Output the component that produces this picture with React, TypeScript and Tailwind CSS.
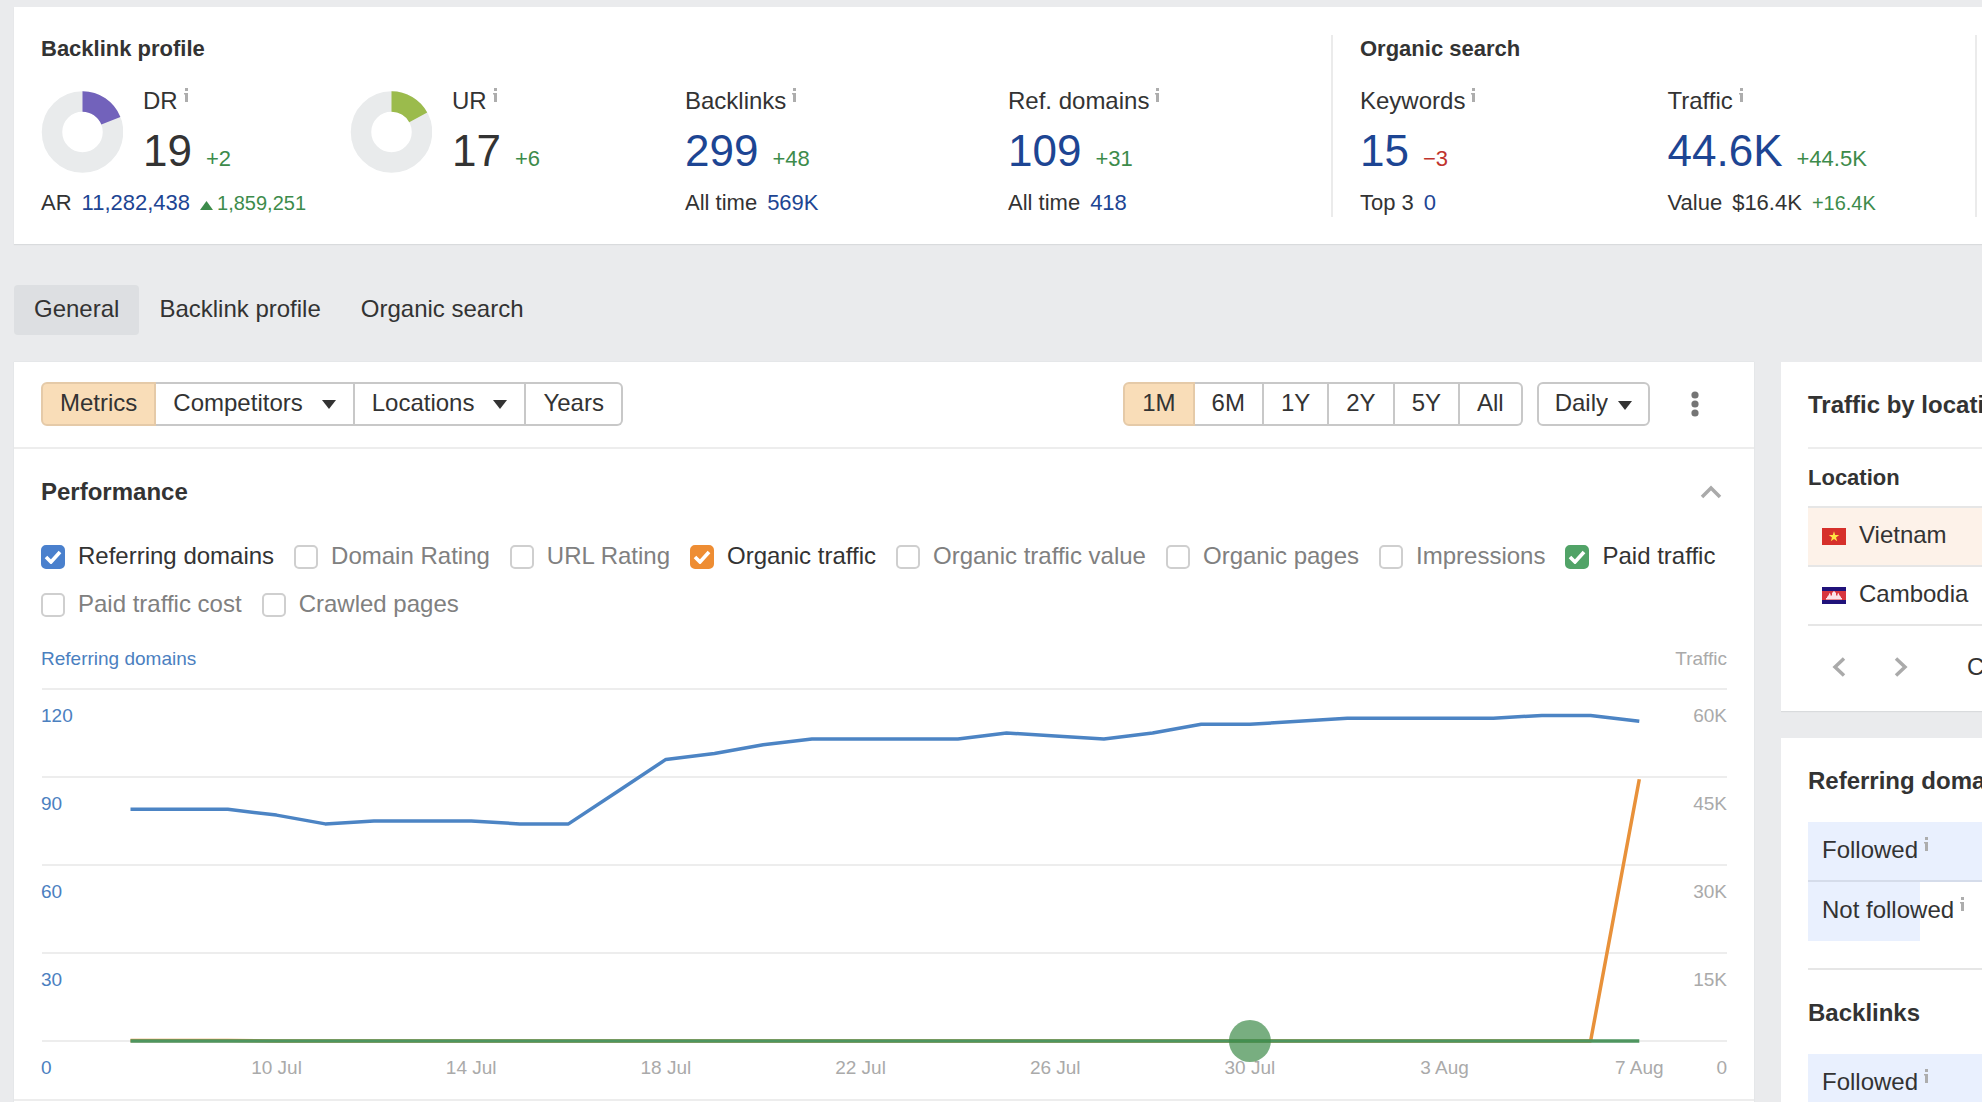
import { clsx } from "clsx";
import { useState } from "react";
import type { ReactNode } from "react";

type Metric = { id: string; label: string; checked?: boolean; color?: string };

const METRICS: Metric[] = [
  { id: "ref-domains", label: "Referring domains", checked: true, color: "checked:border-[#4a80cd] checked:bg-[#4a80cd]" },
  { id: "dr", label: "Domain Rating" },
  { id: "ur", label: "URL Rating" },
  { id: "organic-traffic", label: "Organic traffic", checked: true, color: "checked:border-[#ee8d33] checked:bg-[#ee8d33]" },
  { id: "organic-value", label: "Organic traffic value" },
  { id: "organic-pages", label: "Organic pages" },
  { id: "impressions", label: "Impressions" },
  { id: "paid-traffic", label: "Paid traffic", checked: true, color: "checked:border-[#51a367] checked:bg-[#51a367]" },
  { id: "paid-cost", label: "Paid traffic cost" },
  { id: "crawled", label: "Crawled pages" },
];

const TABS = ["General", "Backlink profile", "Organic search"];
const RANGES = ["1M", "6M", "1Y", "2Y", "5Y", "All"];

// one value per day, 7 Jul - 7 Aug
const REF_DOMAINS = [
  79, 79, 79, 77, 74, 75, 75, 75, 74, 74, 85, 96, 98, 101, 103, 103,
  103, 103, 105, 104, 103, 105, 108, 108, 109, 110, 110, 110, 110, 111, 111, 109,
];
const ORGANIC_TRAFFIC = REF_DOMAINS.map((_, i) => (i === 31 ? 44600 : i < 3 ? 80 : 0));
const PAID_TRAFFIC = REF_DOMAINS.map(() => 0);

const X_LABELS = ["10 Jul", "14 Jul", "18 Jul", "22 Jul", "26 Jul", "30 Jul", "3 Aug", "7 Aug"];
const Y_LEFT = ["120", "90", "60", "30", "0"];
const Y_RIGHT = ["60K", "45K", "30K", "15K", "0"];

function Info() {
  return (
    <svg width="5" height="14" viewBox="0 0 5 14" fill="#adadad" className="mt-[3px] ml-[6px] shrink-0" aria-hidden="true">
      <rect x="1" y="0" width="3" height="3" />
      <path d="M0 5h4v9H1V6.500H0z" />
    </svg>
  );
}

function Caret() {
  return (
    <svg width="14" height="9" viewBox="0 0 14 9" fill="#333" className="mt-[3px] shrink-0" aria-hidden="true">
      <path d="M0 0h14L7 9z" />
    </svg>
  );
}

function Donut({ value, color }: { value: number; color: string }) {
  return (
    <svg width="82" height="82" viewBox="0 0 82 82" fill="none" className="mt-[6px] shrink-0" aria-hidden="true">
      <circle cx="41.500" cy="41" r="30.5" stroke="#e9ebec" strokeWidth="20.5" />
      <circle
        cx="41.500"
        cy="41"
        r="30.5"
        stroke={color}
        strokeWidth="20.5"
        pathLength="100"
        strokeDasharray={`${value} ${100 - value}`}
        transform="rotate(-90 41.500 41)"
      />
    </svg>
  );
}

type StatProps = {
  label: string;
  value: string;
  delta: string;
  down?: boolean;
  plain?: boolean;
};

function Stat({ label, value, delta, down, plain }: StatProps) {
  return (
    <div>
      <div className="flex text-[24px] leading-8">
        {label}
        <Info />
      </div>
      <div className="mt-2 flex items-baseline gap-[14px]">
        {plain ? (
          <span className="text-[44px] leading-[52px]">{value}</span>
        ) : (
          <a href="#" className="text-[44px] leading-[52px] text-[#1d4593]">{value}</a>
        )}
        <span className={clsx("text-[22px] leading-7", down ? "text-[#c0342d]" : "text-[#3d8b4b]")}>{delta}</span>
      </div>
    </div>
  );
}

function SubLine({ children }: { children: ReactNode }) {
  return <div className="mt-3 flex items-baseline gap-[10px] text-[22px] leading-7">{children}</div>;
}

function Overview() {
  return (
    <section className="ml-[14px] grid grid-cols-[1317fr_644fr_7fr] bg-white pt-7 pb-[27px] whitespace-nowrap shadow-[0_1px_1px_#d9dbdd]">
      <div className="pl-[27px]">
        <h2 className="text-[22px] leading-7 font-bold">Backlink profile</h2>
        <div className="mt-[22px] grid grid-cols-[309fr_335fr_323fr_323fr]">
          <div>
            <div className="flex gap-5">
              <Donut value={19} color="#7262bb" />
              <Stat label="DR" value="19" delta="+2" plain />
            </div>
            <SubLine>
              <span>AR</span>
              <a href="#" className="text-[#1d4593]">11,282,438</a>
              <span className="flex items-baseline gap-1 text-[20px] text-[#3d8b4b]">
                <svg width="13" height="9" viewBox="0 0 13 9" fill="currentColor" aria-hidden="true">
                  <path d="M0 9h13L6.500 0z" />
                </svg>
                1,859,251
              </span>
            </SubLine>
          </div>
          <div className="flex gap-5">
            <Donut value={17} color="#9bbb4c" />
            <Stat label="UR" value="17" delta="+6" plain />
          </div>
          <div>
            <Stat label="Backlinks" value="299" delta="+48" />
            <SubLine>
              <span>All time</span>
              <a href="#" className="text-[#1d4593]">569K</a>
            </SubLine>
          </div>
          <div>
            <Stat label="Ref. domains" value="109" delta="+31" />
            <SubLine>
              <span>All time</span>
              <a href="#" className="text-[#1d4593]">418</a>
            </SubLine>
          </div>
        </div>
      </div>
      <div className="border-l-2 border-[#ebebeb] pl-[27px]">
        <h2 className="text-[22px] leading-7 font-bold">Organic search</h2>
        <div className="mt-[22px] grid grid-cols-2">
          <div>
            <Stat label="Keywords" value="15" delta="−3" down />
            <SubLine>
              <span>Top 3</span>
              <a href="#" className="text-[#1d4593]">0</a>
            </SubLine>
          </div>
          <div>
            <Stat label="Traffic" value="44.6K" delta="+44.5K" />
            <SubLine>
              <span>Value</span>
              <span>$16.4K</span>
              <span className="text-[20px] text-[#3d8b4b]">+16.4K</span>
            </SubLine>
          </div>
        </div>
      </div>
      <div className="border-l-2 border-[#ebebeb]" />
    </section>
  );
}

type SegmentProps = { label: string; active?: boolean; menu?: boolean; onClick?: () => void };

function Segment({ label, active, menu, onClick }: SegmentProps) {
  return (
    <button
      onClick={onClick}
      className={clsx(
        "flex h-[44px] items-center gap-[19px] border-y-2 border-r-2 px-[17px] pb-[2px] first:rounded-l-md first:border-l-2 last:rounded-r-md",
        active ? "border-[#e5caa8] bg-[#f9ddb8]" : "border-[#c8c8c8] bg-white"
      )}
    >
      {label}
      {menu && <Caret />}
    </button>
  );
}

function Toolbar() {
  const [range, setRange] = useState("1M");

  return (
    <div className="flex items-center justify-between border-b-2 border-[#ededed] px-[27px] pt-5 pb-[21px]">
      <div className="flex">
        <Segment label="Metrics" active />
        <Segment label="Competitors" menu />
        <Segment label="Locations" menu />
        <Segment label="Years" />
      </div>
      <div className="flex items-center">
        <div className="flex">
          {RANGES.map((r) => (
            <Segment key={r} label={r} active={r === range} onClick={() => setRange(r)} />
          ))}
        </div>
        <div className="ml-[14px] grid items-center">
          <select
            aria-label="Interval"
            defaultValue="Daily"
            className="col-start-1 row-start-1 field-sizing-content h-[44px] appearance-none rounded-md border-2 border-[#c8c8c8] bg-white pr-[40px] pb-[2px] pl-4"
          >
            <option>Daily</option>
            <option>Weekly</option>
            <option>Monthly</option>
          </select>
          <span className="pointer-events-none col-start-1 row-start-1 mr-[18px] justify-self-end">
            <Caret />
          </span>
        </div>
        <button aria-label="More options" className="mr-5 ml-[33px] flex h-[44px] w-6 items-center justify-center">
          <svg width="8" height="26" viewBox="0 0 8 26" fill="#757575" aria-hidden="true">
            <circle cx="4" cy="4" r="3.600" />
            <circle cx="4" cy="13" r="3.600" />
            <circle cx="4" cy="22" r="3.600" />
          </svg>
        </button>
      </div>
    </div>
  );
}

function MetricCheckbox({ metric }: { metric: Metric }) {
  const [checked, setChecked] = useState(!!metric.checked);

  return (
    <label
      htmlFor={metric.id}
      className={clsx("flex items-center gap-[13px] text-[24px] leading-8", checked ? "text-[#333]" : "text-[#808080]")}
    >
      <span className="mt-[2px] grid size-6 place-items-center">
        <input
          id={metric.id}
          type="checkbox"
          checked={checked}
          onChange={(e) => setChecked(e.target.checked)}
          className={clsx(
            "col-start-1 row-start-1 size-6 appearance-none rounded-[5px] border-2 border-[#cfcfcf] bg-white",
            metric.color ?? "checked:border-[#4a80cd] checked:bg-[#4a80cd]"
          )}
        />
        {checked && (
          <svg width="18" height="14" viewBox="0 0 18 14" fill="none" className="pointer-events-none col-start-1 row-start-1" aria-hidden="true">
            <path d="M2 7l5 5L16 2" stroke="#fff" strokeWidth="3.600" />
          </svg>
        )}
      </span>
      {metric.label}
    </label>
  );
}

const x = (i: number) => 89.5 + i * 48.67;
const line = (data: number[], max: number) =>
  data.map((v, i) => `${x(i).toFixed(1)},${(370 - (v / max) * 352).toFixed(1)}`).join(" ");

function PerformanceChart() {
  return (
    <svg viewBox="0 0 1686 416" className="block h-auto w-full" fontSize="19" fill="none" role="img" aria-label="Performance chart">
      {Y_LEFT.map((label, i) => (
        <g key={i}>
          <rect x="1" y={17 + i * 88} width="1685" height="2" fill="#ededed" />
          <text x="0" y={51 + i * 88} fill="#4b80bf">{label}</text>
          <text x="1686" y={51 + i * 88} fill="#aaa" textAnchor="end">{Y_RIGHT[i]}</text>
        </g>
      ))}
      {X_LABELS.map((label, i) => (
        <text key={label} x={x(3 + i * 4)} y="403" fill="#aaa" textAnchor="middle">{label}</text>
      ))}
      <polyline points={line(REF_DOMAINS, 120)} stroke="#4c84c4" strokeWidth="3.500" strokeLinejoin="round" />
      <polyline points={line(ORGANIC_TRAFFIC, 60000)} stroke="#e8913a" strokeWidth="3.500" strokeLinejoin="round" />
      <polyline points={line(PAID_TRAFFIC, 60000)} stroke="#4e955f" strokeWidth="3.500" />
      <circle cx={x(23)} cy="370" r="21" fill="#3f8b4a" fillOpacity="0.7" />
    </svg>
  );
}

function Performance() {
  return (
    <div className="border-b-2 border-[#ededed] px-[27px] pt-[27px] pb-3">
      <div className="flex items-center justify-between">
        <h2 className="text-[24px] leading-8 font-bold">Performance</h2>
        <button aria-label="Collapse" className="mr-[5px]">
          <svg width="22" height="14" viewBox="0 0 22 14" fill="none" aria-hidden="true">
            <path d="M2 12L11 3l9 9" stroke="#aaa" strokeWidth="3.500" />
          </svg>
        </button>
      </div>
      <div className="mt-8 flex flex-wrap gap-x-5 gap-y-4">
        {METRICS.map((m) => (
          <MetricCheckbox key={m.id} metric={m} />
        ))}
      </div>
      <div className="mt-[27px] flex justify-between text-[19px] leading-6">
        <span className="text-[#4b80bf]">Referring domains</span>
        <span className="text-[#aaa]">Traffic</span>
      </div>
      <PerformanceChart />
    </div>
  );
}

function VietnamFlag() {
  return (
    <svg width="24" height="17" viewBox="0 0 24 17" className="mt-[2px] shrink-0" aria-hidden="true">
      <path fill="#d6302b" d="M0 0h24v17H0z" />
      <path fill="#ffe243" d="M12 3.200l1.200 3.800h4l-3.200 2.400 1.200 3.900L12 10.900l-3.200 2.400L10 9.400 6.800 7h4z" />
    </svg>
  );
}

function CambodiaFlag() {
  return (
    <svg width="24" height="17" viewBox="0 0 24 17" className="mt-[2px] shrink-0" aria-hidden="true">
      <path fill="#20127a" d="M0 0h24v17H0z" />
      <path fill="#d8353f" d="M0 4h24v9H0z" />
      <path fill="#fbe3ea" d="M4 12.500v-1.500h1V9.500h1V9l1-1.500V7l.7-1 .8 1v1.500h1.500V6l1-1 .5-.8h1l.5.800 1 1v2.500h1.500V7l.8-1 .7 1v.5L18 9v.5h1V11h1v1.500z" />
    </svg>
  );
}

const LOCATIONS = [
  { name: "Vietnam", flag: <VietnamFlag />, active: true },
  { name: "Cambodia", flag: <CambodiaFlag />, active: false },
];

function LocationsCard() {
  return (
    <section className="bg-white pt-[27px] pb-7 pl-[27px] shadow-[0_1px_1px_#d9dbdd]">
      <h2 className="border-b-2 border-[#ededed] pb-[26px] text-[24px] leading-8 font-bold">Traffic by location</h2>
      <table className="w-full text-left">
        <thead>
          <tr className="border-b-2 border-[#e6e6e6]">
            <th className="pt-[15px] pb-[14px] text-[22px] leading-7 font-bold">Location</th>
          </tr>
        </thead>
        <tbody>
          {LOCATIONS.map((loc) => (
            <tr key={loc.name} className={clsx("border-b-2 border-[#e6e6e6]", loc.active && "bg-[#fdf2e9]")}>
              <td className="pt-[11px] pb-[14px] pl-[14px]">
                <div className="flex items-center gap-[13px] leading-8">
                  {loc.flag}
                  {loc.name}
                </div>
              </td>
            </tr>
          ))}
        </tbody>
      </table>
      <div className="mt-[25px] flex items-center pl-[24px] leading-8">
        <button aria-label="Previous page">
          <svg width="14" height="20" viewBox="0 0 14 20" fill="none" aria-hidden="true">
            <path d="M12 1.500L3 10l9 8.500" stroke="#aaa" strokeWidth="3.500" />
          </svg>
        </button>
        <button aria-label="Next page" className="ml-[48px]">
          <svg width="14" height="20" viewBox="0 0 14 20" fill="none" aria-hidden="true">
            <path d="M2 1.500L11 10l-9 8.500" stroke="#aaa" strokeWidth="3.500" />
          </svg>
        </button>
        <button className="ml-[59px]">Chart</button>
      </div>
    </section>
  );
}

function FollowRow({ label, share, divided }: { label: string; share: string; divided?: boolean }) {
  return (
    <li className={clsx(divided && "border-b-2 border-[#d5dcea]")}>
      <div className={clsx("flex pt-3 pl-[14px] leading-8", divided ? "pb-[14px]" : "pb-[15px]", share)}>
        {label}
        <Info />
      </div>
    </li>
  );
}

function LinksCard() {
  return (
    <section className="bg-white py-[27px] pl-[27px]">
      <h2 className="text-[24px] leading-8 font-bold">Referring domains</h2>
      <ul className="mt-[25px]">
        <FollowRow label="Followed" share="bg-[#e9f0fe]" divided />
        <FollowRow label="Not followed" share="w-[112px] bg-[#e9f0fe]" />
      </ul>
      <h2 className="mt-[27px] border-t-2 border-[#e6e6e6] pt-[27px] text-[24px] leading-8 font-bold">Backlinks</h2>
      <ul className="mt-[25px]">
        <FollowRow label="Followed" share="bg-[#e9f0fe]" divided />
        <FollowRow label="Not followed" share="w-[112px] bg-[#e9f0fe]" />
      </ul>
    </section>
  );
}

export default function App() {
  const [tab, setTab] = useState("General");

  return (
    <div className="h-screen overflow-hidden bg-[#eaebed] pt-[7px] font-['Liberation_Sans',Arial,sans-serif] text-[24px] leading-8 text-[#333]">
      <Overview />

      <nav className="mt-[41px] ml-[14px] flex">
        {TABS.map((t) => (
          <button
            key={t}
            onClick={() => setTab(t)}
            className={clsx("rounded-sm px-5 pt-2 pb-[10px] leading-8", t === tab && "bg-[#dddfe2]")}
          >
            {t}
          </button>
        ))}
      </nav>

      <div className="mt-[27px] flex items-start gap-[27px] pl-[14px]">
        <main className="min-w-0 flex-1 bg-white shadow-[0_0_1px_#d0d3d6]">
          <Toolbar />
          <Performance />
          <div className="h-10" />
        </main>
        <aside className="flex w-[201px] shrink-0 flex-col gap-[27px] overflow-hidden whitespace-nowrap">
          <LocationsCard />
          <LinksCard />
        </aside>
      </div>
    </div>
  );
}
